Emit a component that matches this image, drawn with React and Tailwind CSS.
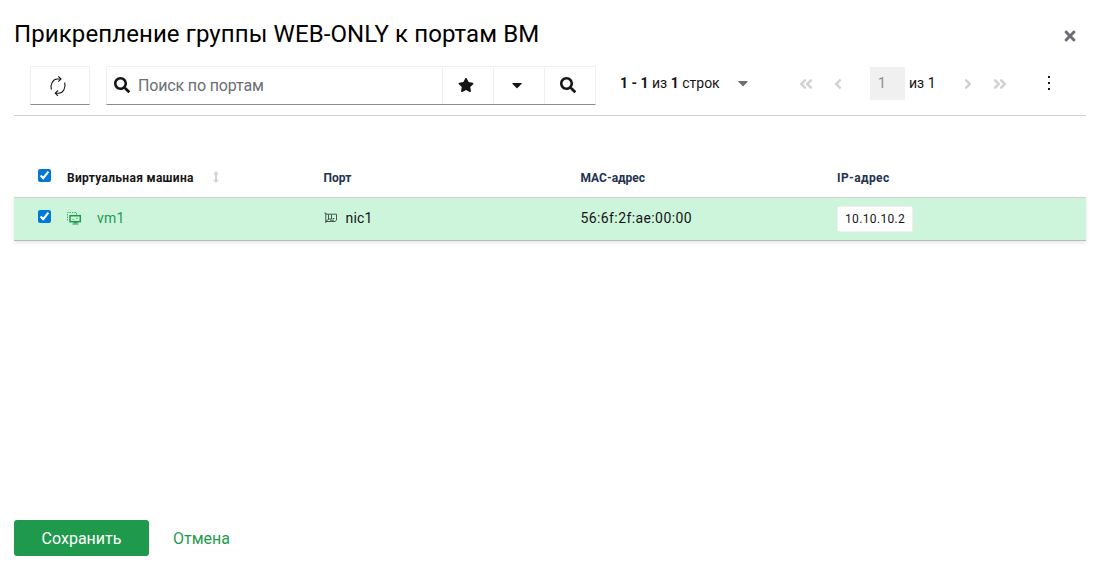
import React from "react";
import {
  FaAngleDoubleLeft,
  FaAngleDoubleRight,
  FaAngleLeft,
  FaAngleRight,
  FaCaretDown,
  FaSearch,
  FaStar,
  FaTimes,
} from "react-icons/fa";

const rows = [
  { id: 1, vm: "vm1", port: "nic1", mac: "56:6f:2f:ae:00:00", ip: "10.10.10.2" },
];

const columns = "grid grid-cols-[53px_256.5px_257px_256.5px_1fr]";

function RefreshIcon() {
  return (
    <svg width="20" height="22" viewBox="0 0 20 22" fill="none" stroke="#151515" strokeWidth="1.1">
      <path d="M3.4 14.5C2 9 5 4 9.500 4H13" />
      <path d="M10.300 1.300 13 4l-2.700 2.700" />
      <path d="M16.700 7.500C18.200 13 15 18.200 10.500 18.200H7.200" />
      <path d="M10 15.500 7.300 18.200l2.700 2.700" />
    </svg>
  );
}

function SortIcon() {
  return (
    <svg width="6" height="12" viewBox="0 0 6 12" fill="#d2d2d2">
      <path d="M3 0 6 3.200H4v5.600h2L3 12 0 8.800h2V3.200H0z" />
    </svg>
  );
}

function VmIcon() {
  return (
    <svg width="15" height="13" viewBox="0 0 15 13" fill="none" stroke="#1f9a4c">
      <path d="M.5 8.500v-8h9v2" strokeWidth=".8" strokeDasharray="1.500 1" />
      <rect x="3" y="3.700" width="10.300" height="6" strokeWidth="1.500" />
      <path d="M5.500 7.500h2M9 6.200h2" strokeWidth=".5" />
      <path d="M6.500 10.700h4" strokeWidth="1.200" />
      <path d="M5.500 12h6" />
    </svg>
  );
}

function NicIcon() {
  return (
    <svg width="14" height="12" viewBox="0 0 14 12" fill="none" stroke="#33483b" strokeWidth=".9">
      <path d="M.4 1h1.400v10" />
      <path d="M1.800 2.200h10.700v6l-1.500 1.300H1.800" />
      <path d="M2 9.300l3-2.500" />
      <path d="M4.500 2.500v4.500h3v-4.500" />
      <path d="M6 8.200h4M8.800 6.500h1.500" />
    </svg>
  );
}

function Checkbox({ label }) {
  return (
    <input
      type="checkbox"
      defaultChecked
      aria-label={label}
      className="m-0 block h-[13px] w-[13px] accent-[#0078d7]"
    />
  );
}

function Toolbar() {
  return (
    <div className="flex h-[50px] border-b border-[#d2d2d2] pl-4 text-[#151515]">
      <button className="flex h-[39px] w-[60px] items-center justify-center border border-[#f0f0f0] border-b-[#8a8d90] pr-1">
        <RefreshIcon />
      </button>

      <div className="ml-4 flex h-[39px] w-[490px] border border-[#f0f0f0] border-b-[#8a8d90]">
        <div className="flex flex-1 items-center pl-[7px]">
          <FaSearch className="mb-0.5 h-4 w-4" />
          <input
            placeholder="Поиск по портам"
            className="ml-2 w-60 text-[16px] tracking-[-0.15px] outline-none placeholder:text-[#6a6e73]"
          />
        </div>
        <button className="flex w-[51px] items-center justify-center border-l border-[#f0f0f0] pr-[5px] pb-0.5">
          <FaStar className="h-4 w-4" />
        </button>
        <button className="flex w-[51px] items-center justify-center border-l border-[#f0f0f0] pr-1 pb-0.5">
          <FaCaretDown className="h-4 w-4" />
        </button>
        <button className="flex w-[51px] items-center justify-center border-l border-[#f0f0f0] pr-1 pb-0.5">
          <FaSearch className="h-4 w-4" />
        </button>
      </div>

      <div className="ml-6 flex h-[35px] items-center text-[14px]">
        <span className="w-[100px] whitespace-nowrap">
          <b>1 - 1</b> из <b>1</b> строк
        </span>
        <FaCaretDown className="mb-px ml-[15px] h-4 w-4 text-[#6a6e73]" />
        <FaAngleDoubleLeft className="ml-[47px] h-4 w-4 text-[#d2d2d2]" />
        <FaAngleLeft className="ml-4 h-4 w-4 text-[#d2d2d2]" />
        <span className="ml-6 flex h-[33px] w-[35px] items-center bg-[#f0f0f0] pl-2 text-[#8a8d90]">1</span>
        <span className="ml-1 w-[27px] whitespace-nowrap">из 1</span>
        <FaAngleRight className="ml-6 h-4 w-4 text-[#d2d2d2]" />
        <FaAngleDoubleRight className="ml-4 h-4 w-4 text-[#d2d2d2]" />
        <svg className="mb-0.5 ml-10 h-[14px] w-[2px]" viewBox="0 0 2 14" fill="#151515">
          <path d="M0 0h2v2H0zM0 6h2v2H0zM0 12h2v2H0z" />
        </svg>
      </div>
    </div>
  );
}

function PortTable() {
  return (
    <div className="mt-[41px]">
      <div className={`${columns} h-10 pt-[3px] text-[12px] font-bold text-[#24324f]`}>
        <div className="pl-6 pt-[9px]">
          <Checkbox label="Выбрать все" />
        </div>
        <div className="flex h-[35px] items-center text-[#151515]">
          <span className="w-[127px] whitespace-nowrap tracking-[0.3px]">Виртуальная машина</span>
          <span className="mb-0.5 ml-[19px]">
            <SortIcon />
          </span>
        </div>
        <div className="flex h-[35px] items-center">Порт</div>
        <div className="flex h-[35px] items-center">MAC-адрес</div>
        <div className="flex h-[35px] items-center tracking-[0.4px]">IP-адрес</div>
      </div>

      {rows.map((row) => (
        <div
          key={row.id}
          className={`${columns} h-11 border-y border-t-[#d2d2d2] border-b-[#b8bbbe] bg-[#cdf5dc] text-[14px] text-[#151515] shadow-[0_2px_4px_rgba(0,0,0,0.1)]`}
        >
          <div className="pl-6 pt-3">
            <Checkbox label={row.vm} />
          </div>
          <div className="flex items-center pb-[2px] text-[#1f9a4c]">
            <VmIcon />
            <span className="ml-[15px] tracking-[0.2px]">{row.vm}</span>
          </div>
          <div className="flex items-center pb-[2px]">
            <NicIcon />
            <span className="ml-2 tracking-[0.2px]">{row.port}</span>
          </div>
          <div className="flex items-center pb-[2px] tracking-[0.4px]">{row.mac}</div>
          <div className="flex items-center">
            <span className="flex h-[26px] w-[76px] items-center rounded-[2px] border border-[#f0f0f0] bg-white pl-[7px] text-[12px] tracking-[0.35px]">
              {row.ip}
            </span>
          </div>
        </div>
      ))}
    </div>
  );
}

export default function App() {
  return (
    <div className="flex h-[576px] w-[1100px] flex-col bg-white px-[14px] pb-5 font-['Roboto','Noto_Sans',sans-serif]">
      <div className="flex h-[66px] items-start justify-between">
        <h1 className="mt-4 text-[24px] leading-9 tracking-[0.1px] text-black">
          Прикрепление группы WEB-ONLY к портам ВМ
        </h1>
        <button aria-label="Закрыть" className="mr-2 mt-7">
          <FaTimes className="h-4 w-4 text-[#6a6e73]" />
        </button>
      </div>
      <Toolbar />
      <PortTable />
      <div className="mt-auto flex h-9 text-[16px]">
        <button className="w-[135px] rounded-[3px] bg-[#1f9a4c] pt-0.5 text-white">Сохранить</button>
        <button className="ml-6 pt-0.5 text-[#1f9a4c]">Отмена</button>
      </div>
    </div>
  );
}
